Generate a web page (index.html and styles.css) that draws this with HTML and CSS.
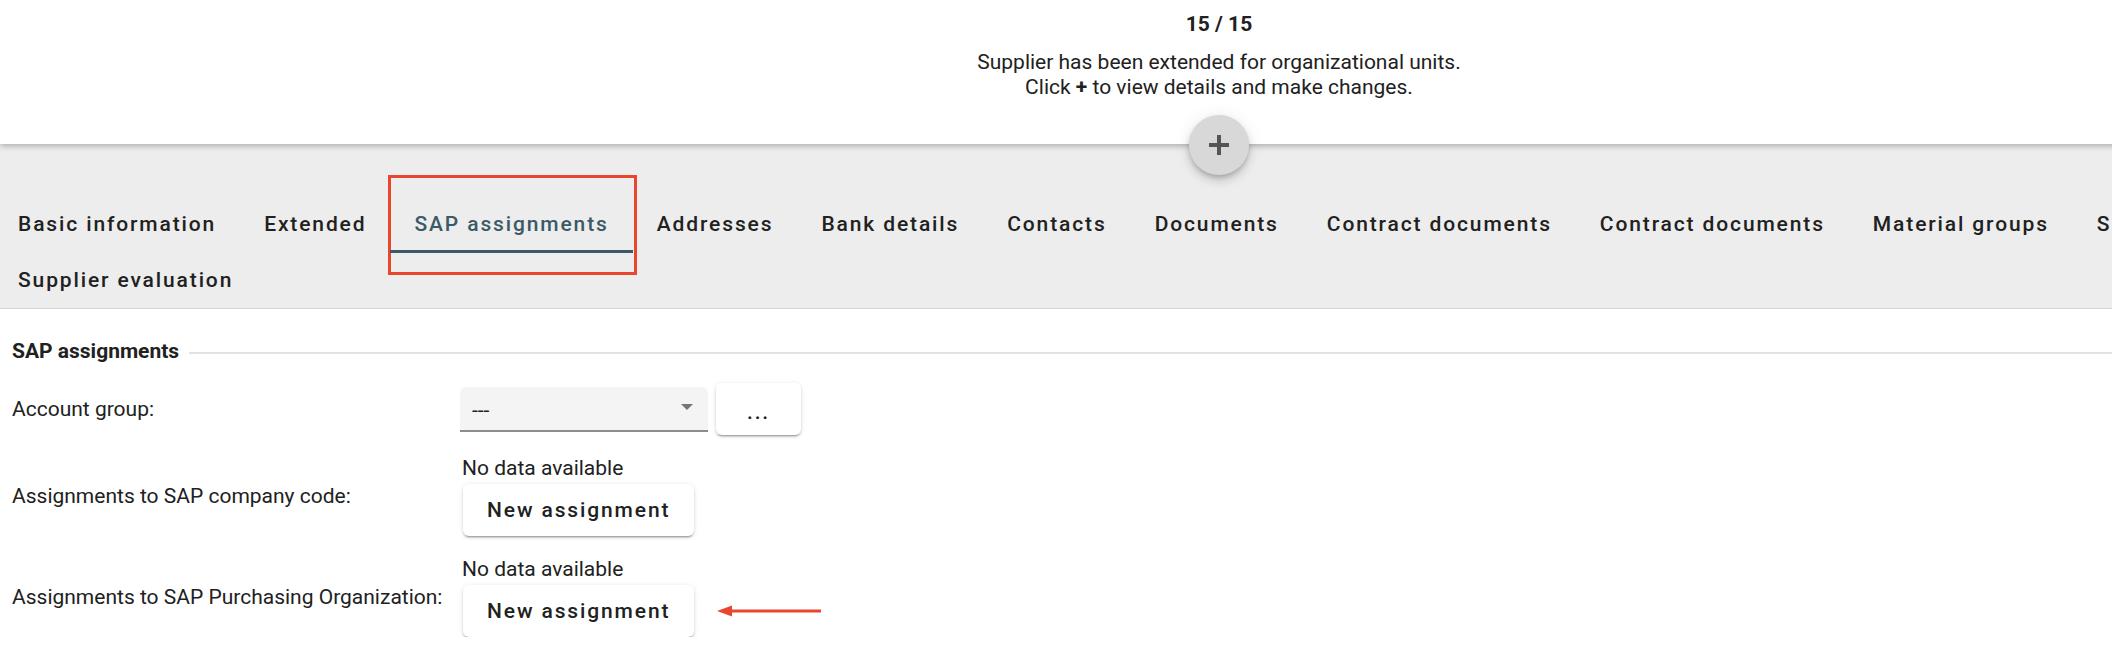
FILE: index.html
```html
<!DOCTYPE html>
<html lang="en">
<head>
<meta charset="utf-8">
<title>Supplier - SAP assignments</title>
<link rel="stylesheet" href="styles.css">
</head>
<body>
<div class="page">
  <header class="summary">
    <div class="count">15 / 15</div>
    <p class="msg">Supplier has been extended for organizational units.<br>Click <b>+</b> to view details and make changes.</p>
    <button class="fab" type="button" aria-label="Show details">
      <svg width="20" height="20" viewBox="0 0 20 20"><path d="M8 0h4v8h8v4h-8v8H8v-8H0V8h8z" fill="#555"/></svg>
    </button>
  </header>

  <nav class="tabs">
    <div class="tab">Basic information</div>
    <div class="tab">Extended</div>
    <div class="tab active">SAP assignments<span class="mark"></span></div>
    <div class="tab">Addresses</div>
    <div class="tab">Bank details</div>
    <div class="tab">Contacts</div>
    <div class="tab">Documents</div>
    <div class="tab">Contract documents</div>
    <div class="tab">Contract documents</div>
    <div class="tab">Material groups</div>
    <div class="tab">Sustainability</div>
    <div class="tab">Supplier evaluation</div>
  </nav>

  <main class="content">
    <h2 class="section-title">SAP assignments</h2>
    <div class="form">
      <div class="label">Account group:</div>
      <div class="value inline">
        <div class="select"><span class="select-text">---</span><span class="caret"></span></div>
        <button class="btn more" type="button">...</button>
      </div>

      <div class="label">Assignments to SAP company code:</div>
      <div class="value stack">
        <div class="nodata">No data available</div>
        <div class="btn-row"><button class="btn" type="button">New assignment</button></div>
      </div>

      <div class="label">Assignments to SAP Purchasing Organization:</div>
      <div class="value stack">
        <div class="nodata">No data available</div>
        <div class="btn-row">
          <button class="btn" type="button">New assignment</button>
          <svg class="arrow" width="104" height="12" viewBox="0 0 104 12"><path d="M0 6 L15 0.5 L15 11.5 Z" fill="#e8472e"/><rect x="12" y="4.5" width="92" height="3" fill="#e8472e"/></svg>
        </div>
      </div>
    </div>
  </main>
</div>
</body>
</html>
```

FILE: styles.css
```css
html, body {
  margin: 0;
  padding: 0;
  background: #ffffff;
  overflow: hidden;
}

body {
  font-family: Roboto, "Liberation Sans", Arial, sans-serif;
  color: #212121;
}

.page {
  width: 2438px;
}

/* ---------- summary header ---------- */
.summary {
  position: relative;
  z-index: 2;
  height: 144px;
  box-sizing: border-box;
  padding-top: 12px;
  background: #ffffff;
  text-align: center;
  box-shadow: 0 2px 6px rgba(0, 0, 0, 0.28);
}

.count {
  font-weight: 700;
  font-size: 21px;
  line-height: 25px;
}

.msg {
  margin: 13px 0 0;
  font-size: 21px;
  line-height: 25px;
}

.msg b {
  font-weight: 700;
}

.fab {
  position: absolute;
  left: 50%;
  bottom: -31px;
  width: 60px;
  height: 60px;
  margin-left: -30px;
  padding: 0;
  border: none;
  border-radius: 50%;
  background: #d8d8d8;
  display: flex;
  align-items: center;
  justify-content: center;
  box-shadow: 0 3px 5px -1px rgba(0, 0, 0, 0.2), 0 6px 10px 0 rgba(0, 0, 0, 0.12), 0 1px 18px 0 rgba(0, 0, 0, 0.08);
}

/* ---------- tabs ---------- */
.tabs {
  position: relative;
  z-index: 1;
  background: #ededed;
  padding: 52px 0 0 0;
  margin: 0 0 0 -6px;
  display: flex;
  flex-wrap: wrap;
  border-bottom: 1px solid #d6d6d6;
}

.tab {
  position: relative;
  height: 56px;
  padding: 0 24px;
  display: flex;
  align-items: center;
  font-weight: 500;
  font-size: 21px;
  letter-spacing: 1.875px;
  color: #212121;
  white-space: nowrap;
}

.tab.active {
  color: #3b5a66;
}

.tab.active::after {
  content: "";
  position: absolute;
  left: 0;
  right: 0;
  bottom: -1px;
  height: 3px;
  background: #3b5a66;
}

.tab .mark {
  position: absolute;
  top: -21px;
  bottom: -23px;
  left: -2px;
  right: -4px;
  border: 3px solid #e8472e;
  pointer-events: none;
}

/* ---------- content ---------- */
.content {
  padding: 30px 0 0 12px;
}

.section-title {
  display: flex;
  align-items: center;
  margin: 0 0 19px;
  font-weight: 700;
  font-size: 21px;
  line-height: 25px;
  color: #212121;
}

.section-title::after {
  content: "";
  flex: 1;
  height: 2px;
  margin-left: 10px;
  margin-top: 2px;
  background: #e2e2e2;
}

.form {
  display: grid;
  grid-template-columns: 448px auto;
  row-gap: 21px;
  align-items: center;
}

.label {
  font-size: 21px;
  line-height: 25px;
  color: #212121;
}

.value.inline {
  display: flex;
  align-items: center;
  height: 52px;
}

.select {
  position: relative;
  width: 248px;
  height: 45px;
  box-sizing: border-box;
  padding: 0 15px 0 12px;
  display: flex;
  align-items: center;
  justify-content: space-between;
  background: #f4f4f4;
  border-bottom: 2px solid #8c8c8c;
  border-radius: 6px 6px 0 0;
  margin-top: 1px;
}

.select-text {
  font-size: 21px;
  color: #212121;
  margin-top: 2px;
}

.caret {
  width: 0;
  height: 0;
  border-left: 6px solid transparent;
  border-right: 6px solid transparent;
  border-top: 6px solid #757575;
  margin-top: -4px;
}

.btn {
  height: 52px;
  padding: 0 24px;
  border: none;
  border-radius: 6px;
  background: #ffffff;
  font-family: Roboto, "Liberation Sans", Arial, sans-serif;
  font-weight: 500;
  font-size: 21px;
  letter-spacing: 1.875px;
  color: #212121;
  box-shadow: 0 3px 1px -2px rgba(0, 0, 0, 0.2), 0 2px 2px 0 rgba(0, 0, 0, 0.14), 0 1px 5px 0 rgba(0, 0, 0, 0.12);
}

.btn.more {
  width: 85px;
  margin-left: 8px;
  padding: 6px 0 0;
  text-align: center;
}

.stack {
  display: flex;
  flex-direction: column;
  align-items: flex-start;
}

.nodata {
  font-size: 21px;
  line-height: 24px;
  padding-left: 2px;
  margin-bottom: 4px;
}

.btn-row {
  display: flex;
  align-items: center;
  padding-left: 3px;
}

.arrow {
  margin-left: 23px;
}
```
